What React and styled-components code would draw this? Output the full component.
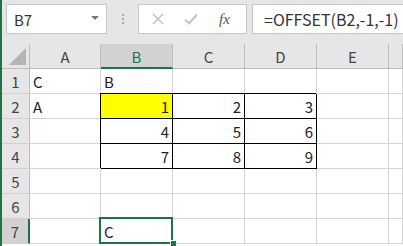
import * as React from 'react';
import styled, { createGlobalStyle } from 'styled-components';

const GlobalStyle = createGlobalStyle`
  html, body {
    margin: 0;
    padding: 0;
    background: #ffffff;
    overflow: hidden;
  }
  * {
    box-sizing: border-box;
  }
`;

const Window = styled.div`
  width: 403px;
  height: 246px;
  border-left: 2px solid #217346;
  display: flex;
  flex-direction: column;
  font-family: 'Noto Sans CJK JP', 'Noto Sans', sans-serif;
  color: #222;
  overflow: hidden;
`;

const FormulaBar = styled.div`
  height: 44px;
  flex-shrink: 0;
  background: #e6e6e6;
  display: flex;
  align-items: flex-start;
  padding: 4px 0 0 4px;
`;

const NameBox = styled.div`
  width: 101px;
  height: 30px;
  background: #fff;
  border: 1px solid #c6c6c6;
  display: flex;
  align-items: center;
  justify-content: space-between;
  padding: 0 7px 0 7px;
  font-size: 15px;
  color: #333;
`;

const Caret = styled.span`
  width: 0;
  height: 0;
  border-left: 4px solid transparent;
  border-right: 4px solid transparent;
  border-top: 4px solid #777;
  margin-top: -3px;
`;

const Grip = styled.div`
  width: 31px;
  height: 30px;
  display: flex;
  flex-direction: column;
  align-items: center;
  justify-content: center;
  gap: 2px;
`;

const Dot = styled.span`
  width: 2px;
  height: 2px;
  background: #a8a8a8;
`;

const ButtonBox = styled.div`
  width: 109px;
  height: 30px;
  background: #fff;
  border: 1px solid #c6c6c6;
  display: flex;
  align-items: center;
  padding-left: 12px;
  gap: 18px;
`;

const Fx = styled.span`
  font-family: 'Liberation Serif', serif;
  font-style: italic;
  font-size: 15px;
  color: #555;
  margin-left: 2px;
`;

const FormulaInput = styled.div`
  margin-left: 5px;
  flex: 1;
  height: 30px;
  background: #fff;
  border: 1px solid #c6c6c6;
  border-right: none;
  display: flex;
  align-items: center;
  padding-left: 11px;
  font-size: 16px;
  color: #333;
  white-space: nowrap;
`;

const Grid = styled.div`
  display: grid;
  grid-template-columns: 28px 71px 72px 72px 72px 72px 1fr;
  grid-auto-rows: 25px;
`;

const Corner = styled.div`
  background: #e6e6e6;
  border-right: 1px solid #bdbdbd;
  border-bottom: 1px solid #bdbdbd;
  position: relative;
`;

const CornerTriangle = styled.div`
  position: absolute;
  right: 3px;
  bottom: 3px;
  width: 0;
  height: 0;
  border-left: 17px solid transparent;
  border-bottom: 17px solid #b4b4b4;
`;

const ColHead = styled.div`
  background: ${p => (p.active ? '#d2d2d2' : '#e6e6e6')};
  border-right: 1px solid #bdbdbd;
  border-bottom: ${p => (p.active ? '2px solid #217346' : '1px solid #bdbdbd')};
  display: flex;
  align-items: center;
  justify-content: center;
  font-size: 15px;
  color: ${p => (p.active ? '#217346' : '#444')};
  padding-top: ${p => (p.active ? '1px' : '0')};
`;

const RowHead = styled.div`
  background: ${p => (p.active ? '#d2d2d2' : '#e6e6e6')};
  border-right: ${p => (p.active ? '2px solid #217346' : '1px solid #bdbdbd')};
  border-bottom: 1px solid #d0d0d0;
  display: flex;
  align-items: center;
  justify-content: center;
  font-size: 15px;
  color: #444;
`;

const Cell = styled.div`
  position: relative;
  background: ${p => p.fill || '#fff'};
  border-right: 1px solid ${p => (p.boxed ? '#000' : '#d4d4d4')};
  border-bottom: 1px solid ${p => (p.boxed ? '#000' : '#d4d4d4')};
  ${p => p.boxed && 'box-shadow: -1px -1px 0 0 #000;'}
  ${p => p.selected && 'z-index: 2;'}
  display: flex;
  align-items: center;
  justify-content: ${p => (p.num ? 'flex-end' : 'flex-start')};
  padding: 0 3px;
  font-size: 15px;
  color: #222;
`;

const Selection = styled.div`
  position: absolute;
  left: -2px;
  top: -2px;
  right: -1px;
  bottom: -1px;
  border: 2px solid #217346;
`;

const FillHandle = styled.div`
  position: absolute;
  right: -4px;
  bottom: -3px;
  width: 6px;
  height: 6px;
  background: #217346;
  border-left: 1px solid #fff;
  border-top: 1px solid #fff;
  z-index: 3;
`;

const columns = ['A', 'B', 'C', 'D', 'E', ''];

const rows = [
  ['C', 'B', '', '', '', ''],
  ['A', 1, 2, 3, '', ''],
  ['', 4, 5, 6, '', ''],
  ['', 7, 8, 9, '', ''],
  ['', '', '', '', '', ''],
  ['', '', '', '', '', ''],
  ['', 'C', '', '', '', ''],
];

export default function App() {
  return (
    <Window>
      <GlobalStyle />
      <FormulaBar>
        <NameBox>
          <span>B7</span>
          <Caret />
        </NameBox>
        <Grip>
          <Dot />
          <Dot />
          <Dot />
        </Grip>
        <ButtonBox>
          <svg width="14" height="14" viewBox="0 0 14 14">
            <path d="M2 2 L12 12 M12 2 L2 12" stroke="#c4c4c4" strokeWidth="1.6" fill="none" />
          </svg>
          <svg width="16" height="14" viewBox="0 0 16 14">
            <path d="M2 7.5 L6 11.5 L14 2.5" stroke="#c4c4c4" strokeWidth="2" fill="none" />
          </svg>
          <Fx>fx</Fx>
        </ButtonBox>
        <FormulaInput>=OFFSET(B2,-1,-1)</FormulaInput>
      </FormulaBar>
      <Grid>
        <Corner>
          <CornerTriangle />
        </Corner>
        {columns.map((c, i) => (
          <ColHead key={i} active={c === 'B'}>{c}</ColHead>
        ))}
        {rows.map((row, r) => (
          <React.Fragment key={r}>
            <RowHead active={r === 6}>{r + 1}</RowHead>
            {row.map((v, c) => {
              const boxed = r >= 1 && r <= 3 && c >= 1 && c <= 3;
              const selected = r === 6 && c === 1;
              return (
                <Cell
                  key={c}
                  num={typeof v === 'number'}
                  boxed={boxed}
                  selected={selected}
                  fill={r === 1 && c === 1 ? '#ffff00' : undefined}
                >
                  {v}
                  {selected && <Selection />}
                  {selected && <FillHandle />}
                </Cell>
              );
            })}
          </React.Fragment>
        ))}
      </Grid>
    </Window>
  );
}
